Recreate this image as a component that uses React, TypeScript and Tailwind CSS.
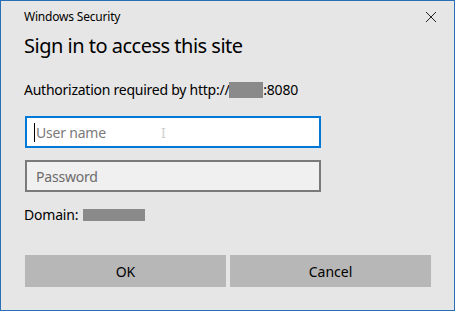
import React from "react";

export default function App() {
  return (
    <div className="w-[457px] h-[312px] bg-white" style={{ fontFamily: '"Noto Sans", "Open Sans", sans-serif' }}>
      <div className="w-[455px] h-[311px] border border-[#2a6fb6] bg-[#e6e6e6] flex flex-col text-black">
        <div className="flex items-start justify-between pl-[23px] pr-[16px] pt-[6px]">
          <span className="text-[12px] leading-[20px] tracking-[-0.2px]">Windows Security</span>
          <svg width="12" height="12" viewBox="0 0 12 12" className="mt-[4px] mr-[1px]">
            <path d="M1 1 L11 11 M11 1 L1 11" stroke="#222" strokeWidth="1" fill="none" />
          </svg>
        </div>
        <div className="pl-[23px] mt-[5px] text-[20px] leading-[28px] tracking-[-0.5px]">Sign in to access this site</div>
        <div className="pl-[23px] mt-[20px] flex items-center text-[14px] leading-[20px] tracking-[-0.25px]">
          <span>Authorization required by http://</span>
          <span className="inline-block w-[34px] h-[16px] bg-[#8a8a8a]"></span>
          <span>:8080</span>
        </div>
        <div className="pl-[24px] mt-[16px] flex flex-col gap-[12px]">
          <div className="relative w-[296px] h-[32px] border-2 border-[#0078d7] bg-white flex items-center pl-[9px] text-[14px] text-[#7a7a7a] tracking-[-0.2px]">
            <span className="absolute left-[7px] top-[5px] w-[1px] h-[19px] bg-black"></span>
            <span>User name</span>
            <span className="absolute left-[134px] top-[7px] text-[#d0d0d0] text-[14px] leading-[16px]">I</span>
          </div>
          <div className="w-[296px] h-[32px] border-2 border-[#7a7a7a] bg-[#f0f0f0] flex items-center pl-[9px] text-[14px] text-[#6b6b6b] tracking-[-0.2px]">
            Password
          </div>
        </div>
        <div className="pl-[23px] mt-[13px] flex items-center text-[14px] leading-[20px] tracking-[-0.2px]">
          <span>Domain:</span>
          <span className="inline-block ml-[5px] w-[62px] h-[12px] bg-[#8a8a8a]"></span>
        </div>
        <div className="pl-[24px] mt-[30px] flex gap-[4px]">
          <div className="w-[201px] h-[32px] bg-[#b7b7b7] flex items-center justify-center text-[14px]">OK</div>
          <div className="w-[201px] h-[32px] bg-[#b7b7b7] flex items-center justify-center text-[14px]">Cancel</div>
        </div>
      </div>
    </div>
  );
}
